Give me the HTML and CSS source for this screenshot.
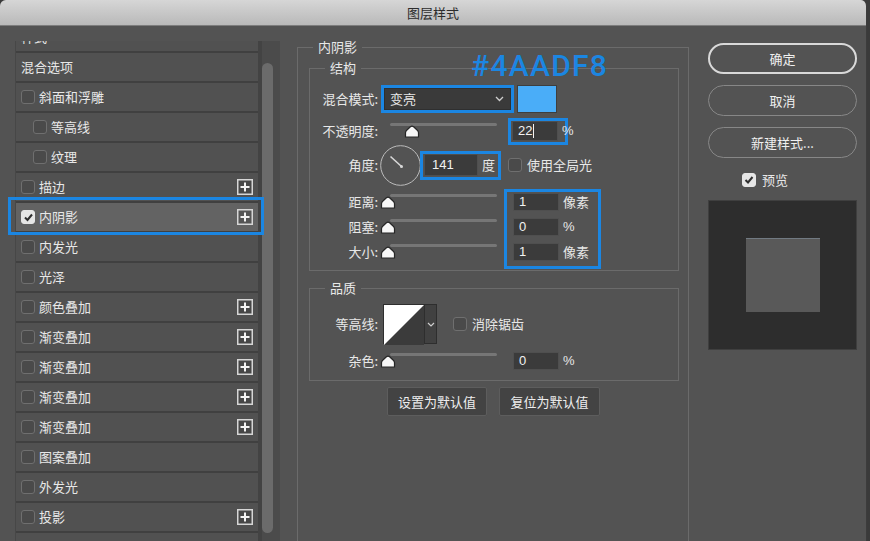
FILE: index.html
```html
<!DOCTYPE html>
<html lang="zh-CN">
<head>
<meta charset="utf-8">
<title>图层样式</title>
<link rel="stylesheet" href="styles.css">
</head>
<body>
<div class="window">
  <header class="titlebar">图层样式</header>
  <div class="content">
    <aside class="layers">
      <div class="list-wrap">
        <ul class="list">
          <li class="row"><span>样式</span></li>
          <li class="row"><span>混合选项</span></li>
          <li class="row"><span class="cb"></span><span>斜面和浮雕</span></li>
          <li class="row sub"><span class="cb"></span><span>等高线</span></li>
          <li class="row sub"><span class="cb"></span><span>纹理</span></li>
          <li class="row"><span class="cb"></span><span>描边</span><svg class="plus" width="16" height="16" viewBox="0 0 16 16"><rect x="0.75" y="0.75" width="14.5" height="14.5" fill="#474747" stroke="#d6d6d6" stroke-width="1.5"/><path d="M8 3.5V12.5M3.5 8H12.5" stroke="#f4f4f4" stroke-width="2"/></svg></li>
          <li class="row active"><span class="cb on"><svg width="11" height="11" viewBox="0 0 11 11"><path d="M2 5.5L4.5 8L9 2.5" fill="none" stroke="#2f2f2f" stroke-width="2"/></svg></span><span>内阴影</span><svg class="plus" width="16" height="16" viewBox="0 0 16 16"><rect x="0.75" y="0.75" width="14.5" height="14.5" fill="#555" stroke="#d6d6d6" stroke-width="1.5"/><path d="M8 3.5V12.5M3.5 8H12.5" stroke="#f4f4f4" stroke-width="2"/></svg></li>
          <li class="row"><span class="cb"></span><span>内发光</span></li>
          <li class="row"><span class="cb"></span><span>光泽</span></li>
          <li class="row"><span class="cb"></span><span>颜色叠加</span><svg class="plus" width="16" height="16" viewBox="0 0 16 16"><rect x="0.75" y="0.75" width="14.5" height="14.5" fill="#474747" stroke="#d6d6d6" stroke-width="1.5"/><path d="M8 3.5V12.5M3.5 8H12.5" stroke="#f4f4f4" stroke-width="2"/></svg></li>
          <li class="row"><span class="cb"></span><span>渐变叠加</span><svg class="plus" width="16" height="16" viewBox="0 0 16 16"><rect x="0.75" y="0.75" width="14.5" height="14.5" fill="#474747" stroke="#d6d6d6" stroke-width="1.5"/><path d="M8 3.5V12.5M3.5 8H12.5" stroke="#f4f4f4" stroke-width="2"/></svg></li>
          <li class="row"><span class="cb"></span><span>渐变叠加</span><svg class="plus" width="16" height="16" viewBox="0 0 16 16"><rect x="0.75" y="0.75" width="14.5" height="14.5" fill="#474747" stroke="#d6d6d6" stroke-width="1.5"/><path d="M8 3.5V12.5M3.5 8H12.5" stroke="#f4f4f4" stroke-width="2"/></svg></li>
          <li class="row"><span class="cb"></span><span>渐变叠加</span><svg class="plus" width="16" height="16" viewBox="0 0 16 16"><rect x="0.75" y="0.75" width="14.5" height="14.5" fill="#474747" stroke="#d6d6d6" stroke-width="1.5"/><path d="M8 3.5V12.5M3.5 8H12.5" stroke="#f4f4f4" stroke-width="2"/></svg></li>
          <li class="row"><span class="cb"></span><span>渐变叠加</span><svg class="plus" width="16" height="16" viewBox="0 0 16 16"><rect x="0.75" y="0.75" width="14.5" height="14.5" fill="#474747" stroke="#d6d6d6" stroke-width="1.5"/><path d="M8 3.5V12.5M3.5 8H12.5" stroke="#f4f4f4" stroke-width="2"/></svg></li>
          <li class="row"><span class="cb"></span><span>图案叠加</span></li>
          <li class="row"><span class="cb"></span><span>外发光</span></li>
          <li class="row"><span class="cb"></span><span>投影</span><svg class="plus" width="16" height="16" viewBox="0 0 16 16"><rect x="0.75" y="0.75" width="14.5" height="14.5" fill="#474747" stroke="#d6d6d6" stroke-width="1.5"/><path d="M8 3.5V12.5M3.5 8H12.5" stroke="#f4f4f4" stroke-width="2"/></svg></li>
          <li class="row"></li>
        </ul>
        <div class="scroll"><div class="scroll-thumb"></div></div>
      </div>
    </aside>

    <main class="settings">
      <fieldset class="group outer">
        <legend>内阴影</legend>
        <fieldset class="group inner struct">
          <legend>结构</legend>
          <div class="field f-blend">
            <span class="lbl">混合模式:</span>
            <div class="hl select-hl">
              <div class="select"><span>变亮</span><svg width="9" height="6" viewBox="0 0 9 6"><path d="M1 1L4.5 4.5L8 1" fill="none" stroke="#cfcfcf" stroke-width="1.3"/></svg></div>
            </div>
            <span class="swatch"></span>
          </div>
          <div class="field f-opacity">
            <span class="lbl">不透明度:</span>
            <div class="slider"><svg class="thumb" style="--v:22" width="16" height="13" viewBox="0 0 16 13"><path d="M1.5 12V7.8Q1.5 6.3 2.7 5.3L6.4 1.8Q8 0.5 9.6 1.8L13.3 5.3Q14.5 6.3 14.5 7.8V12Z" fill="#f7f7f7" stroke="#262626" stroke-width="1.2"/></svg></div>
            <div class="hl op-hl"><span class="num">22<span class="caret"></span></span><span class="unit pct">%</span></div>
          </div>
          <div class="field f-angle">
            <span class="lbl">角度:</span>
            <svg class="dial" width="41" height="41" viewBox="0 0 41 41"><circle cx="20.5" cy="20.5" r="19.8" fill="none" stroke="#bdbdbd" stroke-width="1"/><path d="M21.5 21.5L10.5 11.5" stroke="#d8d8d8" stroke-width="1.6"/><circle cx="21.5" cy="21.5" r="1.5" fill="#d8d8d8"/></svg>
            <div class="hl ang-hl"><span class="num wide">141</span><span class="unit">度</span></div>
            <span class="cb gap-cb"></span><span class="cb-text">使用全局光</span>
          </div>
          <div class="block">
            <div class="sl-col">
              <div class="field"><span class="lbl">距离:</span><div class="slider"><svg class="thumb" style="--v:0" width="16" height="13" viewBox="0 0 16 13"><path d="M1.5 12V7.8Q1.5 6.3 2.7 5.3L6.4 1.8Q8 0.5 9.6 1.8L13.3 5.3Q14.5 6.3 14.5 7.8V12Z" fill="#f7f7f7" stroke="#262626" stroke-width="1.2"/></svg></div></div>
              <div class="field"><span class="lbl">阻塞:</span><div class="slider"><svg class="thumb" style="--v:0" width="16" height="13" viewBox="0 0 16 13"><path d="M1.5 12V7.8Q1.5 6.3 2.7 5.3L6.4 1.8Q8 0.5 9.6 1.8L13.3 5.3Q14.5 6.3 14.5 7.8V12Z" fill="#f7f7f7" stroke="#262626" stroke-width="1.2"/></svg></div></div>
              <div class="field"><span class="lbl">大小:</span><div class="slider"><svg class="thumb" style="--v:0" width="16" height="13" viewBox="0 0 16 13"><path d="M1.5 12V7.8Q1.5 6.3 2.7 5.3L6.4 1.8Q8 0.5 9.6 1.8L13.3 5.3Q14.5 6.3 14.5 7.8V12Z" fill="#f7f7f7" stroke="#262626" stroke-width="1.2"/></svg></div></div>
            </div>
            <div class="hl vals-hl">
              <div class="in-row"><span class="num">1</span><span class="unit">像素</span></div>
              <div class="in-row"><span class="num">0</span><span class="unit pct">%</span></div>
              <div class="in-row"><span class="num">1</span><span class="unit">像素</span></div>
            </div>
          </div>
        </fieldset>

        <fieldset class="group inner quality">
          <legend>品质</legend>
          <div class="field f-contour">
            <span class="lbl">等高线:</span>
            <div class="contour">
              <svg width="40" height="40" viewBox="0 0 40 40"><rect width="40" height="40" fill="#3b3b3b"/><path d="M0 0H40L0 40Z" fill="#ffffff"/></svg>
              <span class="dd"><svg width="8" height="5" viewBox="0 0 8 5"><path d="M1 1L4 4L7 1" fill="none" stroke="#cfcfcf" stroke-width="1.2"/></svg></span>
            </div>
            <span class="cb aa-cb"></span><span class="cb-text">消除锯齿</span>
          </div>
          <div class="field f-noise">
            <span class="lbl">杂色:</span>
            <div class="slider"><svg class="thumb" style="--v:0" width="16" height="13" viewBox="0 0 16 13"><path d="M1.5 12V7.8Q1.5 6.3 2.7 5.3L6.4 1.8Q8 0.5 9.6 1.8L13.3 5.3Q14.5 6.3 14.5 7.8V12Z" fill="#f7f7f7" stroke="#262626" stroke-width="1.2"/></svg></div>
            <span class="num noise-num">0</span><span class="unit pct">%</span>
          </div>
        </fieldset>

        <div class="defaults">
          <button class="btn b1" type="button">设置为默认值</button>
          <button class="btn b2" type="button">复位为默认值</button>
        </div>
      </fieldset>
      <div class="annot">#4AADF8</div>
    </main>

    <aside class="actions">
      <div class="pill primary">确定</div>
      <div class="pill">取消</div>
      <div class="pill">新建样式...</div>
      <div class="preview-toggle"><span class="cb on big"><svg width="12" height="12" viewBox="0 0 12 12"><path d="M2.5 6L5 8.5L9.5 3" fill="none" stroke="#2f2f2f" stroke-width="2"/></svg></span><span>预览</span></div>
      <div class="preview"><div class="preview-sq"></div></div>
    </aside>
  </div>
</div>
</body>
</html>
```
FILE: styles.css
```css
* { box-sizing: border-box; }
html, body { margin: 0; padding: 0; }
body {
  width: 870px;
  height: 541px;
  overflow: hidden;
  background: #3a3a3a;
  font-family: "Noto Sans CJK SC", "Noto Sans", sans-serif;
  font-size: 13px;
  line-height: 16px;
  color: #e8e8e8;
}
.window {
  width: 867px;
  height: 541px;
  background: #535353;
  border-radius: 6px 6px 0 0;
  overflow: hidden;
  display: flex;
  flex-direction: column;
  border-right: 1px solid #3c3c3c;
}
.titlebar {
  height: 26px;
  flex: none;
  background: linear-gradient(#d6d6d6, #b9b9b9);
  border-bottom: 1px solid #7d7d7d;
  color: #2c2c2c;
  text-align: center;
  line-height: 25px;
  font-size: 13px;
}
.content { flex: 1; display: flex; min-height: 0; }

/* left list */
.layers { width: 280px; flex: none; padding-top: 15px; display: flex; flex-direction: column; }
.list-wrap { flex: 1; display: flex; padding-left: 15px; overflow: hidden; }
.list {
  list-style: none;
  margin: -18px 0 0;
  padding: 0;
  width: 243px;
  flex: none;
  border-left: 1px solid #474747;
}
.row {
  height: 30px;
  border-bottom: 2px solid #404040;
  background: #515151;
  display: flex;
  align-items: center;
  gap: 5px;
  padding-left: 5px;
}
.row.sub { padding-left: 17px; }
.row .plus { margin-left: auto; margin-right: 5px; flex: none; }
.row.active { background: #636363; position: relative; }
.row.active::after {
  content: "";
  position: absolute;
  left: -8px;
  right: -6px;
  top: -6px;
  bottom: -4px;
  border: 3px solid #1b86e2;
}
.cb {
  width: 14px;
  height: 14px;
  flex: none;
  border: 1px solid #6f6f6f;
  background: #4a4a4a;
  border-radius: 3px;
  display: inline-flex;
  align-items: center;
  justify-content: center;
}
.row .cb { margin-right: -1px; }
.cb.on { background: #e6e6e6; border-color: #e6e6e6; }
.scroll {
  width: 22px;
  flex: none;
  background: #4b4b4b;
  border-left: 4px solid #434343;
  padding-top: 22px;
}
.scroll-thumb { width: 11px; height: 470px; border-radius: 6px; background: #6b6b6b; }

/* settings */
.settings { width: 392px; margin-left: 17px; flex: none; position: relative; }
.group { margin: 0; border: 1px solid #6b6b6b; min-width: 0; }
.group > legend { padding: 0 5px; line-height: 16px; }
.outer { margin-top: 13px; padding: 0 9px 0 11px; height: 560px; }
.outer > legend { margin-left: 4px; }
.inner { width: 370px; }
.struct { margin-top: 5px; padding: 9px 0 1px; }
.inner > legend { margin-left: 15px; }
.quality { margin-top: 9px; padding: 8px 0 10px; }

.field { display: flex; align-items: center; }
.lbl { width: 68px; flex: none; text-align: right; }
.f-blend { height: 28px; }
.f-opacity { height: 28px; margin-top: 4px; }
.f-angle { height: 40px; }
.block { display: flex; align-items: flex-start; margin-top: 4px; }
.sl-col { padding-top: 4px; display: flex; flex-direction: column; gap: 7px; }
.sl-col .field { height: 18px; }

.hl { border: 3px solid #1b86e2; display: flex; align-items: center; flex: none; }
.select-hl { margin-left: 3px; width: 133px; height: 28px; }
.select {
  width: 127px;
  height: 22px;
  background: #3a3a3a;
  border: 1px solid #2f2f2f;
  display: flex;
  align-items: center;
  justify-content: space-between;
  padding: 0 6px 0 5px;
}
.swatch { margin-left: 3px; width: 40px; height: 28px; background: #4aadf8; border: 1px solid #3e3e3e; flex: none; }

.slider { position: relative; width: 115px; height: 18px; margin-left: 4px; flex: none; }
.slider::before {
  content: "";
  position: absolute;
  left: 8px;
  right: 0;
  top: 1px;
  height: 3px;
  background: #767676;
  border-radius: 2px;
}
.thumb { position: absolute; top: 3px; left: calc(6px + var(--v) * 1.1px); margin-left: -8px; }

.num {
  width: 46px;
  height: 18px;
  flex: none;
  background: #3b3b3b;
  border: 1px solid #4f4f4f;
  color: #f2f2f2;
  font-family: "Liberation Sans", Arial, sans-serif;
  font-size: 13px;
  line-height: 16px;
  padding-left: 5px;
  display: flex;
  align-items: center;
}
.num.wide { width: 54px; height: 22px; padding-left: 7px; }
.caret { width: 1px; height: 14px; background: #f2f2f2; margin-left: 1px; }
.unit { margin-left: 4px; flex: none; }
.pct { font-family: "Liberation Sans", Arial, sans-serif; }

.op-hl { margin-left: 11px; width: 60px; height: 27px; padding-left: 1px; overflow: visible; }
.op-hl .num { height: 20px; }
.op-hl .unit { margin-left: 4px; }
.dial { margin-left: 2px; flex: none; }
.ang-hl { margin-left: -1px; height: 29px; padding: 0 3px 0 1px; }
.gap-cb { margin-left: 7px; }
.cb-text { margin-left: 5px; }

.vals-hl {
  margin-left: 7px;
  width: 97px;
  flex-direction: column;
  align-items: flex-start;
  gap: 7px;
  padding: 1px 0 5px 6px;
}
.in-row { display: flex; align-items: center; height: 18px; }

.f-contour { height: 40px; }
.contour { margin-left: 5px; display: flex; flex: none; height: 40px; border: 1px solid #2e2e2e; }
.contour svg { display: block; }
.dd { width: 12px; background: #414141; border-left: 1px solid #2e2e2e; display: flex; align-items: center; justify-content: center; }
.aa-cb { margin-left: 16px; }
.f-noise { height: 18px; margin-top: 8px; }
.noise-num { margin-left: 16px; }

.defaults { display: flex; gap: 12px; margin: 6px 0 0 78px; }
.btn {
  height: 29px;
  background: #434343;
  border: 1px solid #5d5d5d;
  border-radius: 2px;
  color: #eeeeee;
  font: inherit;
  padding: 0;
}
.b1 { width: 100px; }
.b2 { width: 101px; }

.annot {
  position: absolute;
  left: 174px;
  top: 25px;
  font-family: Roboto, "Liberation Sans", sans-serif;
  font-weight: 500;
  font-size: 30px;
  line-height: 30px;
  letter-spacing: 1.3px;
  color: #1b86e2;
}

/* right */
.actions { width: 149px; margin-left: 19px; padding-top: 17px; display: flex; flex-direction: column; flex: none; }
.pill {
  height: 31px;
  border: 1.5px solid #878787;
  border-radius: 16px;
  display: flex;
  align-items: center;
  justify-content: center;
  color: #f0f0f0;
}
.pill + .pill { margin-top: 11px; }
.pill.primary { border: 2px solid #d9d9d9; }
.preview-toggle { display: flex; align-items: center; gap: 6px; margin-top: 15px; padding-left: 34px; height: 14px; }
.preview {
  margin-top: 13px;
  height: 150px;
  background: #2d2d2d;
  border: 1px solid #3f3f3f;
  display: flex;
  align-items: center;
  justify-content: center;
}
.preview-sq { width: 74px; height: 74px; background: #595959; box-shadow: inset 0 1px 0 #717a82; }
```
